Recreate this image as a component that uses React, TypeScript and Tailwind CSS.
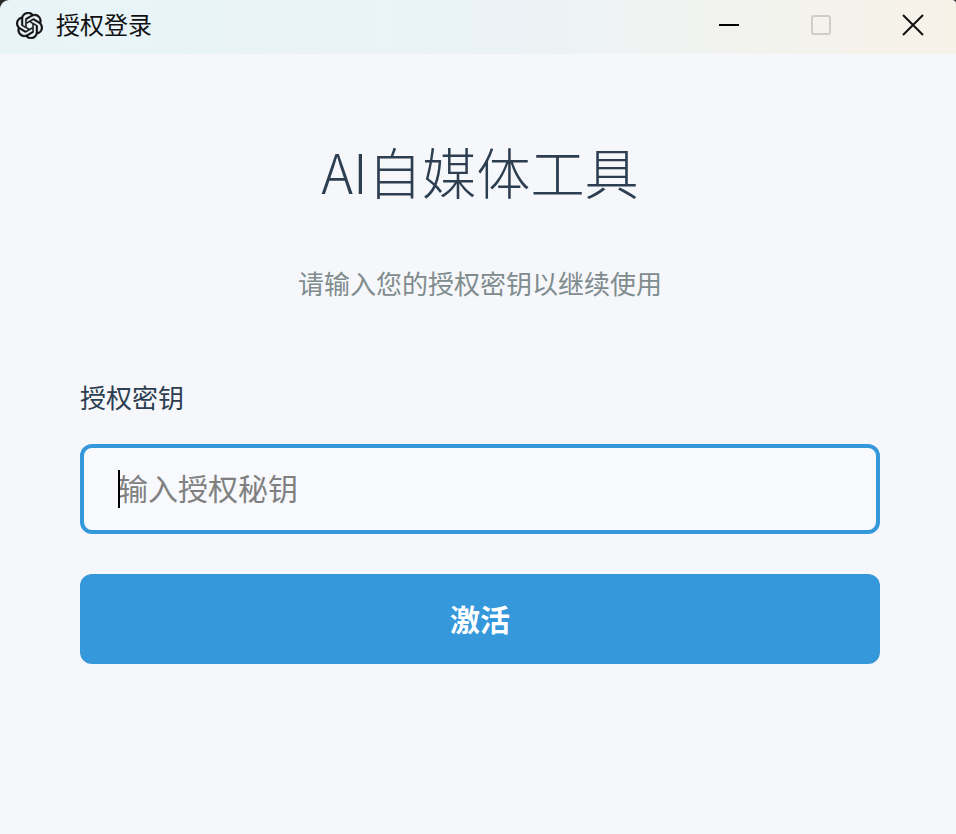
import { SiOpenai } from "react-icons/si";

export default function App() {
  return (
    <div className="flex h-[834px] w-[956px] flex-col overflow-hidden bg-[#2a2a2a] [font-family:'Noto_Sans_CJK_SC','Noto_Sans',sans-serif]">
      <div className="flex h-[54px] shrink-0 items-center rounded-tl-[9px] rounded-tr-[4px] bg-gradient-to-r from-[#e8f5f8] via-[#ebf3f7] to-[#f7f2e8] pb-[4px]">
        <SiOpenai className="ml-[16px] h-[27px] w-[27px] text-[#111]" stroke="currentColor" strokeWidth={0.35} />
        <span className="ml-[13px] mb-[3px] text-[24px] leading-none text-[#111]">授权登录</span>
        <div className="ml-auto flex items-center">
          <div className="flex w-[92px] justify-center">
            <div className="h-[2px] w-[20px] bg-black" />
          </div>
          <div className="mr-[3px] flex w-[92px] justify-center">
            <div className="h-[20px] w-[20px] rounded-[3px] border-2 border-[#cfcdc9]" />
          </div>
          <div className="flex w-[86px] justify-center">
            <svg width="22" height="22" viewBox="0 0 22 22" fill="none" stroke="#111" strokeWidth="2">
              <path d="M1 1 L21 21 M21 1 L1 21" />
            </svg>
          </div>
        </div>
      </div>
      <div className="flex flex-1 flex-col bg-[#f5f7fb] pl-[80px] pr-[76px]">
        <h1 className="mt-[79px] text-center text-[54.2px] font-light leading-[76px] text-[#2c3e50]">AI自媒体工具</h1>
        <p className="mt-[55px] text-center text-[26px] leading-[38px] text-[#7f8c8d]">请输入您的授权密钥以继续使用</p>
        <label className="mt-[76px] text-[26px] leading-[38px] text-[#2c3e50]">授权密钥</label>
        <div className="relative mt-[28px] flex h-[90px] items-center rounded-[12px] border-4 border-[#3498db] bg-[#f7f9fd] pl-[34px]">
          <span className="mb-[4px] text-[30px] leading-none text-[#808080]">输入授权秘钥</span>
          <div className="absolute left-[34px] top-[22px] h-[38px] w-[2px] bg-black" />
        </div>
        <button className="mt-[40px] h-[90px] rounded-[12px] bg-[#3498db] pb-[2px] text-[30px] font-bold text-white">激活</button>
      </div>
    </div>
  );
}
